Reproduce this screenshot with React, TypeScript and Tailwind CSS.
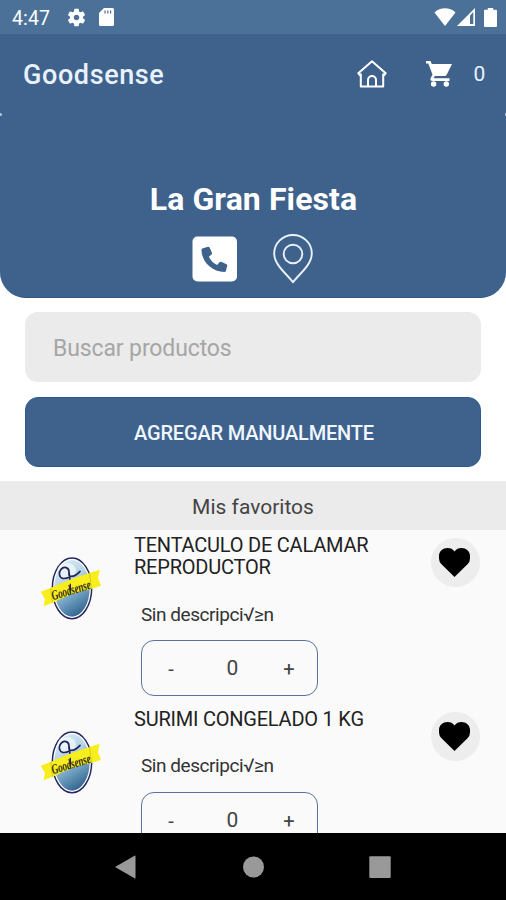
import type { ReactNode } from "react";

type Product = {
  id: number;
  name: string;
  description: string;
  quantity: number;
};

const products: Product[] = [
  {
    id: 1,
    name: "TENTACULO DE CALAMAR REPRODUCTOR",
    description: "Sin descripci√≥n",
    quantity: 0,
  },
  {
    id: 2,
    name: "SURIMI CONGELADO 1 KG",
    description: "Sin descripci√≥n",
    quantity: 0,
  },
];

const StatusBar = () => (
  <div className="flex h-[34px] shrink-0 items-center justify-between bg-[#4b7199] pr-[9px] pl-3 text-white">
    <div className="flex items-center">
      <span className="w-[53.5px] pt-[3px] text-[19.5px] leading-none tracking-[0.1px]">4:47</span>
      <svg className="h-[21px] w-[21px]" viewBox="0 0 24 24" fill="currentColor">
        <path d="M19.43 12.98c.04-.32.07-.64.07-.98s-.03-.66-.07-.98l2.11-1.65c.19-.15.24-.42.12-.64l-2-3.46c-.12-.22-.39-.3-.61-.22l-2.49 1c-.52-.4-1.08-.73-1.69-.98l-.38-2.65C14.46 2.18 14.25 2 14 2h-4c-.25 0-.46.18-.49.42l-.38 2.65c-.61.25-1.17.59-1.69.98l-2.49-1c-.23-.09-.49 0-.61.22l-2 3.46c-.13.22-.07.49.12.64l2.11 1.65c-.04.32-.07.65-.07.98s.03.66.07.98l-2.11 1.65c-.19.15-.24.42-.12.64l2 3.46c.12.22.39.3.61.22l2.49-1c.52.4 1.08.73 1.69.98l.38 2.65c.03.24.24.42.49.42h4c.25 0 .46-.18.49-.42l.38-2.65c.61-.25 1.17-.59 1.69-.98l2.49 1c.23.09.49 0 .61-.22l2-3.46c.12-.22.07-.49-.12-.64l-2.11-1.65zM12 15.2c-1.8 0-3.2-1.4-3.2-3.2s1.4-3.2 3.2-3.2 3.2 1.4 3.2 3.2-1.4 3.2-3.2 3.2z" />
      </svg>
      <svg className="ml-3 h-[18px] w-[15px]" viewBox="0 0 15 18">
        <path d="M5 0h8.5a1.5 1.5 0 0 1 1.5 1.5v15a1.5 1.5 0 0 1-1.5 1.5h-12A1.5 1.5 0 0 1 0 16.5V5z" fill="#fff" />
        <path d="M6 2.5v3M8.8 2.5v3M11.6 2.5v3" stroke="#4b7199" strokeWidth="1.2" />
      </svg>
    </div>
    <div className="flex items-center">
      <svg className="h-[18px] w-[22px]" viewBox="0 0 22 18">
        <path d="M11 18 .5 4.5C3.5 1.6 7 .3 11 .3s7.5 1.3 10.5 4.2z" fill="#fff" />
      </svg>
      <svg className="ml-px h-[18px] w-[18px]" viewBox="0 0 18 18">
        <path d="M0 18 18 0v18z" fill="#fff" />
        <path d="M13 7.5 16.3 4v12H13z" fill="#4b7199" />
      </svg>
      <svg className="ml-[9px] h-[19px] w-[13px]" viewBox="0 0 13 19">
        <path d="M3.8 0h5.4v1.8H12a1 1 0 0 1 1 1V18a1 1 0 0 1-1 1H1a1 1 0 0 1-1-1V2.8a1 1 0 0 1 1-1h2.8z" fill="#fff" />
      </svg>
    </div>
  </div>
);

const HomeIcon = () => (
  <svg className="h-7 w-[30px]" viewBox="0 0 30 28" fill="none" stroke="#fff" strokeWidth="2" strokeLinejoin="round">
    <path d="M15 1.3 28.7 13.2l-1.5 1.9-1-.8V26.4H3.8V14.3l-1 .8-1.5-1.9z" />
    <path d="M11 26.4V20a4 4 0 0 1 8 0v6.4" />
  </svg>
);

const CartIcon = () => (
  <svg className="h-[26px] w-[26px]" viewBox="0 0 26 26">
    <path d="M0 0h4.5l1.3 2.9H26L20.8 13.5q-.8 1.5-2.3 1.5H8.8l-1.2 2.3H23.5V20H6.500q-2.500 0-2-2.500l2-4L2.300 2.600H0z" fill="#fff" />
    <circle cx="7.6" cy="23" r="2.700" fill="#fff" />
    <circle cx="20.3" cy="23" r="2.700" fill="#fff" />
  </svg>
);

const PhoneIcon = () => (
  <svg className="h-[46px] w-[46px]" viewBox="0 0 46 46">
    <rect x="0.5" y="0.5" width="44.5" height="45" rx="5" fill="#fff" />
    <path
      d="M10.3 12.5 16 10.8q1.100-.2 1.600.8l2.300 5.200q.4 1-.5 1.800l-2.500 2.200c2 4 4.400 6.300 8.300 8.100l2.200-2.600q.8-.9 1.800-.5l5.300 2.400q1 .5.7 1.600l-1.300 5.200q-.4 1-1.500 1C19.500 35.500 9.500 25.500 9.500 13.700q0-.9.8-1.200z"
      fill="#3f628d"
    />
  </svg>
);

const PinIcon = () => (
  <svg className="h-[50px] w-10" viewBox="0 0 40 50" fill="none" stroke="#e9f1fb" strokeWidth="1.9">
    <path d="M20 48.3C15.500 41.500 1.200 31.500 1.200 19.500a18.800 18.500 0 0 1 37.600 0C38.800 31.500 24.500 41.500 20 48.300z" strokeLinejoin="round" />
    <circle cx="20" cy="20" r="9.3" />
  </svg>
);

const BrandLogo = ({ id }: { id: number }) => (
  <svg className="h-[63px] w-[62px] overflow-visible" viewBox="60 80 186 189">
    <defs>
      <linearGradient id={`oval-${id}`} x1="0.3" y1="0" x2="0.7" y2="1">
        <stop offset="0" stopColor="#d8ebf7" />
        <stop offset="0.35" stopColor="#b5d2e5" />
        <stop offset="0.65" stopColor="#6f9fc0" />
        <stop offset="1" stopColor="#2d5f8c" />
      </linearGradient>
    </defs>
    <ellipse cx="156" cy="174" rx="59" ry="91" fill="#fff" stroke="#27275e" strokeWidth="4.5" />
    <ellipse cx="156" cy="174" rx="53" ry="85" fill={`url(#oval-${id})`} />
    <ellipse cx="140" cy="122" rx="28" ry="24" fill="#fff" opacity="0.6" />
    <path
      d="M128 144c-11-3-13-18-5-27 9-10 24-6 24 8 0 8-2 12 5 13 12 1 20-6 28-15M147 125c3 18 4 32 4 55M128 144c10 2 18-3 24-6"
      fill="none"
      stroke="#20255a"
      strokeWidth="5"
      strokeLinecap="round"
    />
    <path d="M62 184 92 173Q148 146 209 128L239 118 234 143 243 166 214 176Q150 190 98 217L71 228 75 206z" fill="#f9ee1d" />
    <path d="M92 173 98 217M209 128 214 176" stroke="#cfc31a" strokeWidth="2.5" />
    <path d="M151 160v28" stroke="#20255a" strokeWidth="4" />
    <text
      x="99"
      y="210"
      transform="rotate(-17 99 210)"
      textLength="121"
      lengthAdjust="spacingAndGlyphs"
      className="fill-[#2b2a1c] font-['Liberation_Serif',serif] text-[42px] font-bold italic"
    >
      Goodsense
    </text>
  </svg>
);

const FavoriteButton = () => (
  <button className="mt-[7.5px] flex size-[49px] items-center justify-center rounded-full bg-[#ededed]">
    <svg className="mr-0.5 h-[29px] w-[31px]" viewBox="0 0 31 29">
      <path d="M15.5 29 2.500 16.300Q0 13.800 0 10.500V8C0 3 4 0 8.500 0Q13 0 15.500 3.400 18 0 22.500 0C27 0 31 3 31 8v2.500q0 3.300-2.500 5.800z" />
    </svg>
  </button>
);

const QuantityStepper = ({ quantity }: { quantity: number }) => (
  <div className="flex h-14 w-[177px] items-center rounded-[13px] border-[1.5px] border-[#58749f] pt-0.5 text-[20px] text-[#444]">
    <button className="w-[58px] text-center">-</button>
    <span className="flex-1 pl-1 text-center text-[21px]">{quantity}</span>
    <button className="w-[56px] text-center">+</button>
  </div>
);

const ProductRow = ({ product }: { product: Product }) => (
  <div className="flex h-[174px] shrink-0 items-start pr-[26px] pl-10">
    <div className="mt-[27px] w-[94px]">
      <BrandLogo id={product.id} />
    </div>
    <div className="flex flex-1 flex-col items-start pt-[3.5px]">
      <h3 className="w-[250px] text-[20px] leading-[22.5px] tracking-[-0.22px] text-[#222]">
        {product.name}
      </h3>
      <p className="mt-6 mb-[14.5px] pl-[7px] text-[19px] leading-[23px] tracking-[-0.45px] text-[#333]">
        {product.description}
      </p>
      <div className="pl-[7px]">
        <QuantityStepper quantity={product.quantity} />
      </div>
    </div>
    <FavoriteButton />
  </div>
);

const NavButton = ({ children }: { children: ReactNode }) => (
  <button className="flex w-[127px] justify-center">
    <svg className="size-6 fill-[#999]" viewBox="0 0 24 24">
      {children}
    </svg>
  </button>
);

export default function App() {
  return (
    <div className="flex h-[900px] w-[506px] flex-col overflow-hidden bg-white font-[Roboto,sans-serif]">
      <StatusBar />

      <header className="relative h-[264px] shrink-0 rounded-b-[26px] border-b-[1.5px] border-[#2b5685] bg-[#3f628d]">
        <div className="flex h-20 items-center pr-5 pl-[23px]">
          <h1 className="flex-1 pt-0.5 text-[27px] font-medium tracking-[0.6px] text-[#e9f2fc]">Goodsense</h1>
          <HomeIcon />
          <div className="ml-[39px]">
            <CartIcon />
          </div>
          <span className="ml-[21px] w-[13px] pt-0.5 text-center text-[21px] text-[#e9f2fc]">0</span>
        </div>
        <span className="absolute top-[79px] left-0 h-[3px] w-0.5 rounded-r bg-[#b4c5d9]" />
        <span className="absolute top-[79px] right-0 h-[3px] w-px rounded-l bg-[#b4c5d9]" />
        <h2 className="mt-[65px] pl-px text-center text-[32px] leading-10 font-bold tracking-[0.1px] text-white">
          La Gran Fiesta
        </h2>
        <div className="mt-[15px] flex items-center justify-center gap-[35px] pr-0.5">
          <PhoneIcon />
          <PinIcon />
        </div>
      </header>

      <div className="flex shrink-0 flex-col gap-[15px] px-[25px] pt-[14px] pb-[14px]">
        <input
          type="text"
          placeholder="Buscar productos"
          className="h-[70px] rounded-[13px] bg-[#ebebeb] px-7 pt-0.5 text-[23px] tracking-[-0.12px] text-[#333] outline-none placeholder:text-[#a6a6a6]"
        />
        <button className="h-[70px] rounded-[13px] border border-[#2b5b8c] bg-[#3f628d] pt-0.5 pl-0.5 text-[20px] font-medium tracking-[-0.18px] text-[#f1f7ff]">
          AGREGAR MANUALMENTE
        </button>
      </div>

      <div className="flex h-[49px] shrink-0 items-center justify-center bg-[#ebebeb] pt-[4px] text-[21px] text-[#444]">
        Mis favoritos
      </div>

      <main className="flex min-h-0 flex-1 flex-col overflow-hidden bg-[#fafafa]">
        {products.map((product) => (
          <ProductRow key={product.id} product={product} />
        ))}
      </main>

      <nav className="flex h-[67px] shrink-0 items-center justify-center bg-black">
        <NavButton>
          <path d="M1 12 21 .5q.5 0 .5.5v22q0 .5-.5.5z" />
        </NavButton>
        <NavButton>
          <circle cx="12.5" cy="12" r="10.5" />
        </NavButton>
        <NavButton>
          <rect x="1.3" y="1.3" width="21.4" height="21.7" rx="1" />
        </NavButton>
      </nav>
    </div>
  );
}
